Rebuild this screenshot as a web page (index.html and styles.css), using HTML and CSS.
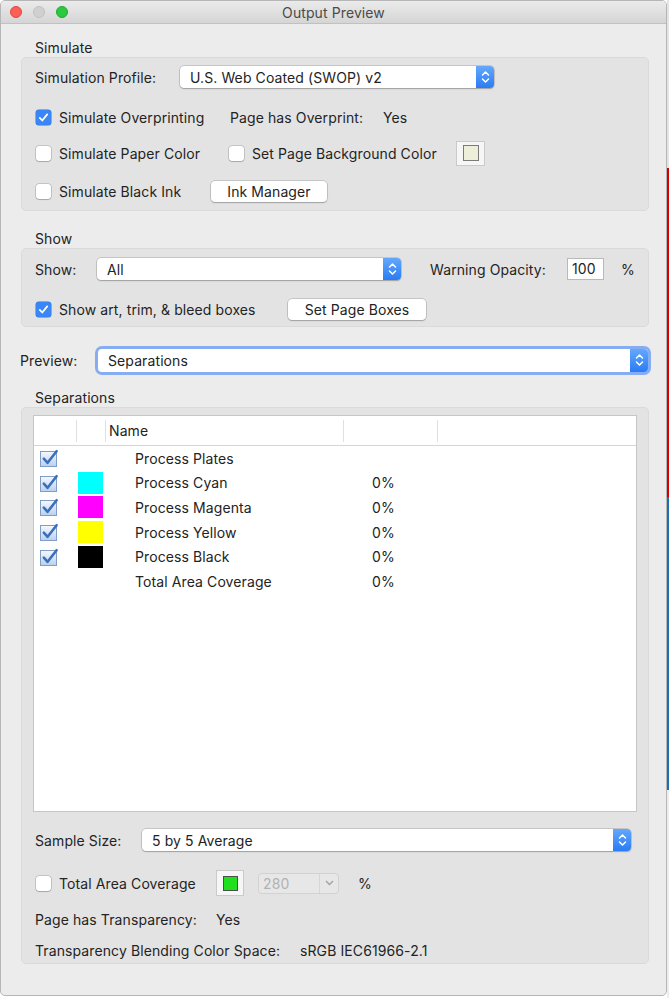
FILE: index.html
```html
<!DOCTYPE html>
<html>

<head>
	<title>Output Preview</title>
	<meta charset="utf-8">
	<link rel="stylesheet" href="styles.css">
</head>

<body>
	<div class="desk">
		<div class="window">
			<header class="titlebar">
				<div class="lights">
					<span class="light red"></span>
					<span class="light off"></span>
					<span class="light green"></span>
				</div>
				<div class="title">Output Preview</div>
			</header>

			<main class="content">
				<!-- Simulate -->
				<div class="group-label first">Simulate</div>
				<section class="box box-sim">
					<div class="row">
						<span class="lead w-profile">Simulation Profile:</span>
						<div class="select sel-profile">
							<span class="val">U.S. Web Coated (SWOP) v2</span>
							<span class="stepper"><svg width="9" height="14" viewBox="0 0 9 14"><path d="M1.5 5 L4.5 2 L7.5 5 M1.5 9 L4.5 12 L7.5 9" /></svg></span>
						</div>
					</div>
					<div class="row r-2">
						<label class="check w-overprint"><span class="cb on"><svg viewBox="0 0 15 15"><path d="M3.8 7.9 L6.3 10.5 L11.2 4.4" /></svg></span>Simulate Overprinting</label>
						<span class="lead w-haslabel">Page has Overprint:</span>
						<span>Yes</span>
					</div>
					<div class="row r-3">
						<label class="check w-paper"><span class="cb"></span>Simulate Paper Color</label>
						<label class="check w-pagebg"><span class="cb"></span>Set Page Background Color</label>
						<span class="swatch"><span class="swatch-in cream"></span></span>
					</div>
					<div class="row r-4">
						<label class="check w-black"><span class="cb"></span>Simulate Black Ink</label>
						<button class="btn btn-ink">Ink Manager</button>
					</div>
				</section>

				<!-- Show -->
				<div class="group-label">Show</div>
				<section class="box box-show">
					<div class="row">
						<span class="lead w-show">Show:</span>
						<div class="select sel-show">
							<span class="val">All</span>
							<span class="stepper"><svg width="9" height="14" viewBox="0 0 9 14"><path d="M1.5 5 L4.5 2 L7.5 5 M1.5 9 L4.5 12 L7.5 9" /></svg></span>
						</div>
						<span class="lead w-warn">Warning Opacity:</span>
						<span class="field">100</span>
						<span class="pct">%</span>
					</div>
					<div class="row">
						<label class="check w-boxes"><span class="cb on"><svg viewBox="0 0 15 15"><path d="M3.8 7.9 L6.3 10.5 L11.2 4.4" /></svg></span>Show art, trim, &amp; bleed boxes</label>
						<button class="btn btn-boxes">Set Page Boxes</button>
					</div>
				</section>

				<!-- Preview -->
				<div class="row preview-row">
					<span class="lead w-preview">Preview:</span>
					<div class="select sel-preview">
						<span class="val">Separations</span>
						<span class="stepper"><svg width="9" height="14" viewBox="0 0 9 14"><path d="M1.5 5 L4.5 2 L7.5 5 M1.5 9 L4.5 12 L7.5 9" /></svg></span>
					</div>
				</div>

				<!-- Separations -->
				<div class="group-label sep-label">Separations</div>
				<section class="box box-sep">
					<div class="table">
						<div class="thead">
							<span class="th"></span>
							<span class="th sep"></span>
							<span class="th sep">Name</span>
							<span class="th sep"></span>
							<span class="th sep"></span>
						</div>
						<div id="rows"></div>
					</div>

					<div class="row r-sample">
						<span class="lead w-sample">Sample Size:</span>
						<div class="select sel-sample">
							<span class="val">5 by 5 Average</span>
							<span class="stepper"><svg width="9" height="14" viewBox="0 0 9 14"><path d="M1.5 5 L4.5 2 L7.5 5 M1.5 9 L4.5 12 L7.5 9" /></svg></span>
						</div>
					</div>
					<div class="row r-tac">
						<label class="check w-tac"><span class="cb"></span>Total Area Coverage</label>
						<span class="swatch"><span class="swatch-in green"></span></span>
						<span class="combo"><span class="combo-val">280</span><span class="combo-arrow"><svg width="9" height="6" viewBox="0 0 9 6"><path d="M1 1 L4.5 4.5 L8 1" /></svg></span></span>
						<span class="pct pct-tac">%</span>
					</div>
					<div class="row r-trans">
						<span class="lead w-trans">Page has Transparency:</span>
						<span>Yes</span>
					</div>
					<div class="row r-blend">
						<span class="lead w-blend">Transparency Blending Color Space:</span>
						<span>sRGB IEC61966-2.1</span>
					</div>
				</section>
			</main>
		</div>
		<div class="edge"></div>
	</div>

	<template id="row-temp">
		<div class="tr">
			<span class="td td-check"></span>
			<span class="td td-sw"></span>
			<span class="td td-name"></span>
			<span class="td td-pct"></span>
			<span class="td"></span>
		</div>
	</template>

	<script>
		const plates = [
			{ navn: "Process Plates", farve: "", check: true, pct: "" },
			{ navn: "Process Cyan", farve: "#00ffff", check: true, pct: "0%" },
			{ navn: "Process Magenta", farve: "#ff00ff", check: true, pct: "0%" },
			{ navn: "Process Yellow", farve: "#ffff00", check: true, pct: "0%" },
			{ navn: "Process Black", farve: "#000000", check: true, pct: "0%" },
			{ navn: "Total Area Coverage", farve: "", check: false, pct: "0%" }
		];

		const checkIcon = '<svg width="22" height="20" viewBox="0 0 22 20"><defs><linearGradient id="cbg" x1="0" y1="0" x2="0" y2="1"><stop offset="0" stop-color="#f6f9fd"/><stop offset="1" stop-color="#b9d0ee"/></linearGradient></defs><rect x="1.5" y="3.5" width="16" height="15" fill="url(#cbg)" stroke="#7f9dc6"/><path d="M4.8 10.6 L8.6 14.8 L17.6 3.2" fill="none" stroke="#3c70ba" stroke-width="2.6" stroke-linecap="round" stroke-linejoin="round"/></svg>';

		const dest = document.querySelector("#rows");
		const temp = document.querySelector("#row-temp");

		plates.forEach((p) => {
			const klon = temp.cloneNode(true).content;
			if (p.check) klon.querySelector(".td-check").innerHTML = checkIcon;
			if (p.farve) {
				const sw = document.createElement("span");
				sw.className = "plate-sw";
				sw.style.background = p.farve;
				klon.querySelector(".td-sw").appendChild(sw);
			}
			klon.querySelector(".td-name").textContent = p.navn;
			klon.querySelector(".td-pct").textContent = p.pct;
			dest.appendChild(klon);
		});
	</script>
</body>

</html>
```

FILE: styles.css
```css
* {
	box-sizing: border-box;
}

body {
	margin: 0;
	padding: 0;
	background: #fff;
	font-family: Inter, "Noto Sans", sans-serif;
	font-size: 14px;
	letter-spacing: 0.1px;
	color: #232323;
}

.desk {
	display: flex;
	height: 998px;
}

.window {
	width: 667px;
	height: 996px;
	background: #ececec;
	border: 1px solid #b6b6b6;
	border-radius: 5px;
	overflow: hidden;
	display: flex;
	flex-direction: column;
}

.edge {
	flex: 1;
	background: linear-gradient(to bottom, #e4e4e4 0, #e4e4e4 168px, #d30000 168px, #d30000 497px, #1f6fae 497px, #1f6fae 790px, #ededed 790px);
}

/* title bar */
.titlebar {
	height: 23px;
	flex: none;
	position: relative;
	background: linear-gradient(#ebebeb, #d5d5d5);
	border-bottom: 1px solid #c1c1c1;
	display: flex;
	align-items: center;
	justify-content: center;
}

.lights {
	position: absolute;
	left: 9px;
	top: 5px;
	display: flex;
	gap: 11px;
}

.light {
	width: 12px;
	height: 12px;
	border-radius: 50%;
}

.red {
	background: #fc5f57;
	border: 1px solid #e1463f;
}

.off {
	background: #d0d0d0;
	border: 1px solid #c1c1c1;
}

.green {
	background: #2bc840;
	border: 1px solid #1faa2e;
}

.title {
	font-size: 14px;
	color: #4b4b4b;
	padding-top: 1px;
}

/* content */
.content {
	flex: 1;
	padding: 0 17px 0 20px;
}

.group-label {
	height: 18px;
	line-height: 18px;
	padding-left: 14px;
	margin-top: 19px;
}

.group-label.first {
	margin-top: 15px;
}

.group-label.sep-label {
	margin-top: 17px;
}

.box {
	background: #e3e3e3;
	border: 1px solid #dadada;
	border-radius: 5px;
	padding: 0 12px 0 13px;
}

.box-sim {
	padding-top: 7px;
	padding-bottom: 7px;
}

.box-sim .r-2 {
	margin-top: 16px;
}

.box-sim .r-3 {
	margin-top: 12px;
}

.box-sim .r-4 {
	margin-top: 14px;
}

.box-show {
	padding-top: 8px;
	padding-bottom: 5px;
}

.box-show .row+.row {
	margin-top: 16px;
}

.box-sep {
	padding: 7px 11px 1px 11px;
}

.box-sep .row {
	margin-left: 2px;
}

.row {
	display: flex;
	align-items: center;
	height: 24px;
	white-space: nowrap;
}

.lead {
	flex: none;
}

.w-profile {
	width: 145px;
}

.w-overprint {
	width: 195px;
}

.w-haslabel {
	width: 153px;
}

.w-paper {
	width: 193px;
}

.w-pagebg {
	width: 228px;
}

.w-black {
	width: 176px;
}

.w-show {
	width: 62px;
}

.w-warn {
	width: 137px;
	margin-left: 29px;
}

.w-boxes {
	width: 253px;
}

.w-preview {
	width: 78px;
}

.w-sample {
	width: 107px;
}

.w-tac {
	width: 181px;
}

.w-trans {
	width: 181px;
}

.w-blend {
	width: 265px;
}

/* checkbox */
.check {
	display: flex;
	align-items: center;
	gap: 8px;
	flex: none;
}

.cb {
	width: 15px;
	height: 15px;
	margin-left: 1px;
	border-radius: 3px;
	background: #fff;
	box-shadow: 0 0 0 0.5px rgba(0, 0, 0, 0.28), 0 1px 1px rgba(0, 0, 0, 0.14);
	flex: none;
	display: flex;
}

.cb.on {
	background: #3a86f7;
	box-shadow: 0 0 0 0.5px #2f72d8;
}

.cb svg {
	width: 15px;
	height: 15px;
}

.cb path {
	fill: none;
	stroke: #fff;
	stroke-width: 1.8;
	stroke-linecap: round;
	stroke-linejoin: round;
}

/* popup select */
.select {
	height: 22px;
	background: #fff;
	border-radius: 4px;
	box-shadow: 0 0 0 0.5px rgba(0, 0, 0, 0.25), 0 1px 1.5px rgba(0, 0, 0, 0.2);
	display: flex;
	align-items: center;
	padding-left: 10px;
	flex: none;
}

.select .val {
	flex: 1;
}

.stepper {
	width: 18px;
	align-self: stretch;
	background: linear-gradient(#64a8fc, #2a7cf5);
	border-radius: 0 4px 4px 0;
	display: flex;
	align-items: center;
	justify-content: center;
}

.stepper path {
	fill: none;
	stroke: #fff;
	stroke-width: 1.5;
	stroke-linecap: round;
	stroke-linejoin: round;
}

.sel-profile {
	width: 314px;
}

.sel-show {
	width: 304px;
}

.sel-preview {
	width: 550px;
	height: 23px;
	box-shadow: 0 0 0 3px #86acf1, 0 0 0 0.5px rgba(0, 0, 0, 0.3);
}

.sel-sample {
	width: 489px;
}

.preview-row {
	margin-top: 21px;
	margin-left: -1px;
}

/* buttons */
.btn {
	font: inherit;
	letter-spacing: 0.1px;
	color: #232323;
	height: 21px;
	padding: 0;
	border: none;
	background: #fff;
	border-radius: 4px;
	box-shadow: 0 0 0 0.5px rgba(0, 0, 0, 0.25), 0 1px 1.5px rgba(0, 0, 0, 0.2);
	flex: none;
}

.btn-ink {
	width: 116px;
}

.btn-boxes {
	width: 138px;
}

.field {
	width: 37px;
	height: 22px;
	background: #fff;
	border: 1px solid #b9b9b9;
	padding-left: 4px;
	line-height: 20px;
	flex: none;
}

.pct {
	margin-left: 17px;
}

.pct-tac {
	margin-left: 19px;
}

/* colour wells */
.swatch {
	width: 29px;
	height: 25px;
	border: 1px solid #cacaca;
	background: #f6f6f6;
	display: flex;
	align-items: center;
	justify-content: center;
	flex: none;
}

.swatch-in {
	width: 16px;
	height: 16px;
	border: 1px solid #7a7a7a;
}

.cream {
	background: #eeeed9;
}

.swatch-in.green {
	background: #1fe01c;
	border: 1px solid #4d4d4d;
	width: 15px;
	height: 15px;
}

.r-tac .swatch {
	width: 28px;
	height: 26px;
	margin-right: 14px;
}

.combo {
	width: 81px;
	height: 21px;
	border: 1px solid #d2d2d2;
	border-radius: 4px;
	background: #e7e7e7;
	display: flex;
	align-items: center;
	color: #b2b2b2;
	flex: none;
}

.combo-val {
	flex: 1;
	padding-left: 4px;
}

.combo-arrow {
	width: 19px;
	align-self: stretch;
	border-left: 1px solid #d6d6d6;
	display: flex;
	align-items: center;
	justify-content: center;
}

.combo-arrow path {
	fill: none;
	stroke: #a3a3a3;
	stroke-width: 1.4;
}

/* separations table */
.table {
	height: 397px;
	background: #fff;
	border: 1px solid #c6c6c6;
}

.thead {
	display: grid;
	grid-template-columns: 42px 29px 238px 94px 1fr;
	height: 30px;
	border-bottom: 1px solid #d5d5d5;
	align-items: center;
}

.th {
	height: 22px;
	line-height: 22px;
	padding-left: 3px;
}

.th.sep {
	border-left: 1px solid #e0e0e0;
}

.tr {
	display: grid;
	grid-template-columns: 42px 29px 238px 94px 1fr;
	height: 24.6px;
	align-items: center;
}

.td {
	height: 24.6px;
	display: flex;
	align-items: center;
}

.td-check {
	padding-left: 5px;
}

.td-sw {
	padding-left: 2px;
}

.plate-sw {
	width: 25px;
	height: 22px;
}

.td-name {
	padding-left: 30px;
}

.td-pct {
	padding-left: 29px;
}

.r-sample {
	margin-top: 16px;
}

.r-tac {
	margin-top: 19px;
}

.r-trans {
	margin-top: 12px;
}

.r-blend {
	margin-top: 7px;
}
```
